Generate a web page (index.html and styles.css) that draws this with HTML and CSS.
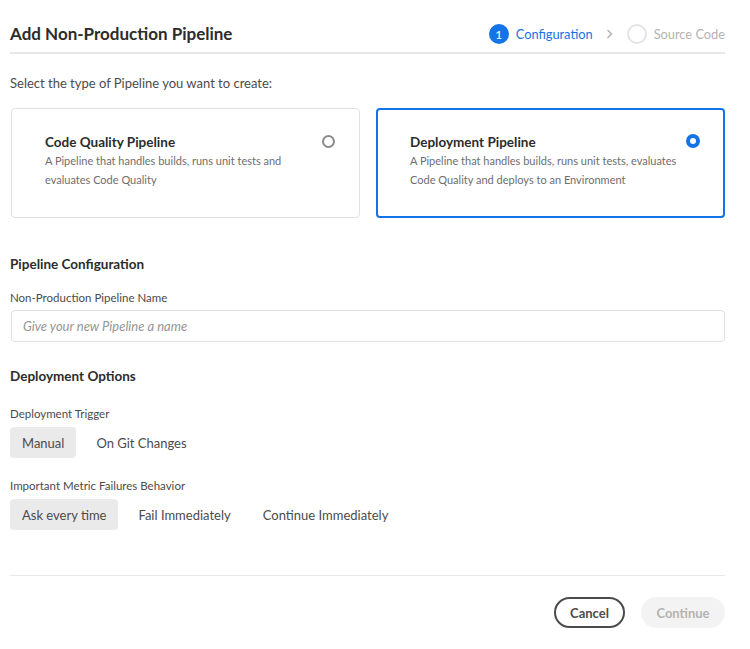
FILE: index.html
```html
<!DOCTYPE html>
<html lang="en">
<head>
<meta charset="utf-8">
<title>Add Non-Production Pipeline</title>
<link rel="stylesheet" href="styles.css">
</head>
<body>
<div class="page">
  <header class="header">
    <h1 class="title">Add Non-Production Pipeline</h1>
    <ol class="steps">
      <li class="step step-active"><span class="step-dot">1</span><span class="step-label">Configuration</span></li>
      <li class="step-chevron"><svg width="8" height="10" viewBox="0 0 8 10"><path d="M2 1.5 L5.5 5 L2 8.5" fill="none" stroke="#b3b3b3" stroke-width="1.6" stroke-linecap="round" stroke-linejoin="round"/></svg></li>
      <li class="step step-todo"><span class="step-dot"></span><span class="step-label">Source Code</span></li>
    </ol>
  </header>

  <p class="intro">Select the type of Pipeline you want to create:</p>

  <div class="cards">
    <div class="card">
      <div class="card-body">
        <div class="card-title">Code Quality Pipeline</div>
        <div class="card-desc">A Pipeline that handles builds, runs unit tests and evaluates Code Quality</div>
      </div>
      <span class="radio"></span>
    </div>
    <div class="card card-selected">
      <div class="card-body">
        <div class="card-title">Deployment Pipeline</div>
        <div class="card-desc">A Pipeline that handles builds, runs unit tests, evaluates Code Quality and deploys to an Environment</div>
      </div>
      <span class="radio radio-on"></span>
    </div>
  </div>

  <h2 class="section-title first">Pipeline Configuration</h2>
  <label class="field-label">Non-Production Pipeline Name</label>
  <input class="text-input" type="text" placeholder="Give your new Pipeline a name">

  <h2 class="section-title">Deployment Options</h2>
  <div class="field-label">Deployment Trigger</div>
  <div class="segmented">
    <button class="seg seg-on">Manual</button>
    <button class="seg">On Git Changes</button>
  </div>

  <div class="field-label second">Important Metric Failures Behavior</div>
  <div class="segmented">
    <button class="seg seg-on">Ask every time</button>
    <button class="seg">Fail Immediately</button>
    <button class="seg">Continue Immediately</button>
  </div>

  <footer class="footer">
    <button class="btn btn-cancel">Cancel</button>
    <button class="btn btn-continue" disabled>Continue</button>
  </footer>
</div>
</body>
</html>
```

FILE: styles.css
```css
* { box-sizing: border-box; }
html, body { margin: 0; background: #ffffff; }
body {
  font-family: Lato, "Open Sans", "Liberation Sans", sans-serif;
  color: #4b4b4b;
}
.page {
  width: 750px;
  padding: 0 25px 0 10px;
}
.header {
  display: flex;
  justify-content: space-between;
  align-items: center;
  padding-top: 22px;
  padding-bottom: 6px;
  border-bottom: 2px solid #e8e8e8;
}
.title {
  margin: 0;
  font-size: 17px;
  line-height: 24px;
  font-weight: 700;
  color: #2c2c2c;
}
.steps {
  display: flex;
  align-items: center;
  list-style: none;
  margin: 0;
  padding: 0;
}
.step { display: flex; align-items: center; gap: 7px; font-size: 12.8px; }
.step-dot {
  width: 20px; height: 20px;
  border-radius: 50%;
  display: flex; align-items: center; justify-content: center;
  font-size: 12px;
}
.step-active .step-dot { background: #1473e6; color: #fff; }
.step-active .step-label { color: #1473e6; }
.step-todo .step-dot { border: 2px solid #e4e4e4; }
.step-todo .step-label { color: #b3b3b3; }
.step-chevron { display: flex; margin: 0 13px 0 13px; }

.intro {
  margin: 20px 0 0;
  font-size: 13px;
  line-height: 18px;
  color: #4b4b4b;
}
.cards {
  display: grid;
  grid-template-columns: 1fr 1fr;
  gap: 16px;
  margin-top: 16px;
  padding-left: 1px;
}
.card {
  height: 110px;
  border: 1px solid #e1e1e1;
  border-radius: 4px;
  padding: 24px 24px 0 33px;
  display: flex;
  justify-content: space-between;
  align-items: flex-start;
}
.card-selected { border: 2px solid #1473e6; padding: 23px 23px 0 32px; }
.card-title {
  font-size: 13.5px;
  line-height: 18px;
  font-weight: 700;
  color: #2c2c2c;
}
.card-desc {
  font-size: 11px;
  line-height: 19px;
  color: #6e6e6e;
  max-width: 275px;
}
.radio {
  flex: none;
  width: 13px; height: 13px;
  margin-top: 2px;
  border-radius: 50%;
  border: 2px solid #8a8a8a;
  background: #fff;
}
.radio-on { border: 4px solid #1473e6; width: 14px; height: 14px; margin-top: 1px; }

.section-title {
  margin: 25px 0 0;
  font-size: 13.5px;
  line-height: 18px;
  font-weight: 700;
  color: #2c2c2c;
}
.section-title.first { margin-top: 37px; }
.field-label {
  display: block;
  margin-top: 17px;
  font-size: 11.5px;
  line-height: 16px;
  color: #4b4b4b;
}
.section-title + .field-label { margin-top: 21px; }
.section-title.first + .field-label { margin-top: 17px; }
.field-label.second { margin-top: 20px; }
.text-input {
  display: block;
  width: calc(100% - 1px);
  margin-left: 1px;
  height: 32px;
  margin-top: 4px;
  border: 1px solid #e1e1e1;
  border-radius: 4px;
  padding: 0 11px;
  font-family: inherit;
  font-size: 13px;
  color: #4b4b4b;
  background: #fff;
}
.text-input::placeholder { color: #959595; font-style: italic; }
.segmented {
  display: flex;
  gap: 8px;
  margin-top: 5px;
}
.seg {
  height: 31px;
  padding: 0 12px;
  border: none;
  border-radius: 4px;
  background: transparent;
  font-family: inherit;
  font-size: 13px;
  color: #4b4b4b;
}
.seg-on { background: #eaeaea; }
.footer {
  margin-top: 45px;
  border-top: 1px solid #e8e8e8;
  padding-top: 21px;
  display: flex;
  justify-content: flex-end;
  gap: 16px;
}
.btn {
  height: 31px;
  border-radius: 16px;
  font-family: inherit;
  font-size: 13px;
  font-weight: 700;
  padding: 0 14px;
}
.btn-cancel {
  border: 2px solid #4b4b4b;
  background: #fff;
  color: #4b4b4b;
  width: 71px;
}
.btn-continue {
  border: none;
  background: #f3f3f3;
  color: #b3b3b3;
  width: 84px;
}
```
